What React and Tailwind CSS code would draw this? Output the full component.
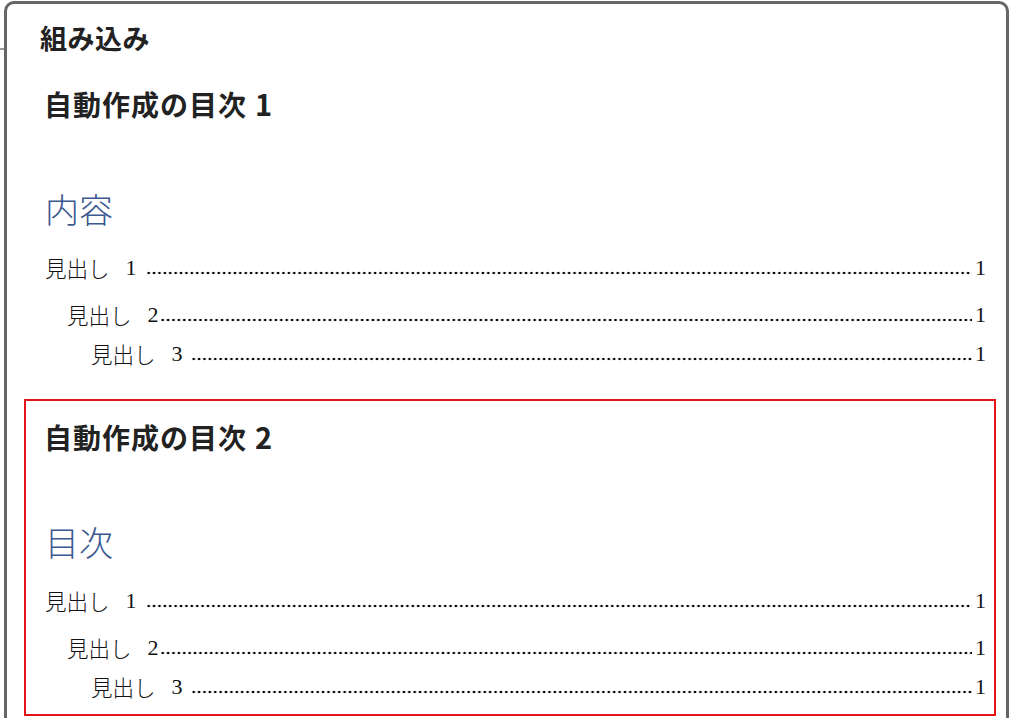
import React from "react";

const serif = { fontFamily: '"Liberation Serif", "Noto Sans CJK JP", serif' };

function Row({ indent, level, gap }) {
  return (
    <div
      className="flex items-start h-[32px] text-[22px] leading-[32px] text-[#111]"
      style={{ ...serif, paddingLeft: indent }}
    >
      <span className="whitespace-nowrap font-[family-name:'Noto_Sans_CJK_JP'] font-light text-[21.5px]">見出し</span>
      <span className="ml-[16px]">{level}</span>
      <span
        className="flex-1 mt-[19px] h-[4px] bg-[radial-gradient(circle,#000_1.1px,transparent_1.6px)] bg-[length:5.4px_4px] bg-repeat-x bg-left"
        style={{ marginLeft: gap }}
      />
      <span className="pl-[3px]">1</span>
    </div>
  );
}

function TocBlock({ title, heading, red }) {
  return (
    <div
      className={
        "border-2 ml-[17px] mr-[10px] pl-[18px] pr-[8px] pt-[15px] pb-[11px] " +
        (red ? "border-[#e3131b]" : "border-transparent")
      }
    >
      <div className="h-[40px] leading-[40px] text-[28px] font-bold text-[#222] tracking-[1px] whitespace-nowrap">
        {title[0]}
        <span className="ml-[8px] text-[29px]">{title[1]}</span>
      </div>
      <div className="mt-[62px] h-[48px] leading-[48px] text-[34px] font-light text-[#3b5890] pl-[1px]">
        {heading}
      </div>
      <div className="mt-[19px]">
        <Row indent={1} level="1" gap={9} />
      </div>
      <div className="mt-[15px]">
        <Row indent={23} level="2" gap={1} />
      </div>
      <div className="mt-[7px]">
        <Row indent={47} level="3" gap={8} />
      </div>
    </div>
  );
}

export default function App() {
  return (
    <div
      className="w-[1012px] h-[718px] overflow-hidden bg-white relative"
      style={{ fontFamily: '"Noto Sans CJK JP", "Noto Sans", sans-serif' }}
    >
      <div className="absolute left-0 top-[48px] w-[4px] h-[2px] bg-[#9a9a9a]" />
      <div className="ml-[4px] mr-[3px] mt-[1px] h-[760px] border-[3px] border-[#666] rounded-t-[10px] bg-white pt-[16px]">
        <div className="h-[36px] leading-[36px] pl-[33px] text-[27px] font-bold text-[#222] tracking-[0.5px]">
          組み込み
        </div>
        <div className="mt-[10px]">
          <TocBlock title={["自動作成の目次", "1"]} heading="内容" />
        </div>
        <div className="mt-[16px]">
          <TocBlock title={["自動作成の目次", "2"]} heading="目次" red />
        </div>
      </div>
    </div>
  );
}
